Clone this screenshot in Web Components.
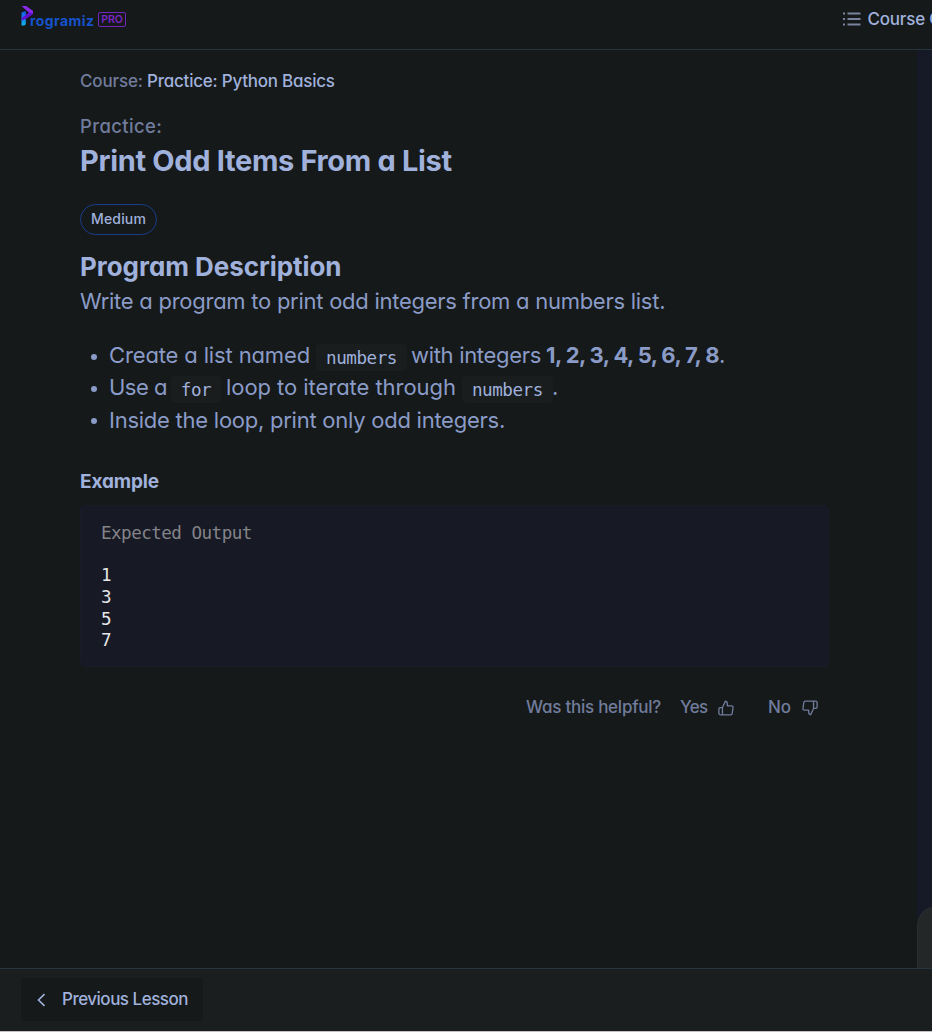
<!DOCTYPE html>
<html lang="en"><head><meta charset="utf-8"><title>Programiz PRO</title>
<style>
html,body{margin:0;height:100%;background:#151919;overflow:hidden}
body{font-family:Inter,"Open Sans",sans-serif;font-feature-settings:"cv11";color:#a0b1dc;--muted:#717c9c;--line:#26343d}
</style></head><body>
<lesson-app></lesson-app>
<script>
const define=(name,html)=>customElements.define(name,class extends HTMLElement{
  constructor(){super();this.attachShadow({mode:'open'}).innerHTML=html;}
});

define('brand-logo',`<style>
:host{display:flex;align-items:flex-start;height:26px;width:108px}
svg{display:block;flex:none;width:13px;height:22px}
b{font:700 14px/20px Inter,sans-serif;letter-spacing:.42px;color:#1552cb;margin:5px 0 0 -4px;width:67px;white-space:nowrap}
i{font:600 10.5px/14px Inter,sans-serif;letter-spacing:0;color:#7a25c4;border:1px solid #7226bd;border-radius:2px;width:26px;height:13px;text-align:center;margin:6px 0 0 1px;box-sizing:content-box}
</style><svg viewBox="0 0 13 22"><defs><linearGradient id="g" x1="0" y1="0" x2="0" y2="1"><stop offset="0" stop-color="#1558e8"/><stop offset="1" stop-color="#10b4ef"/></linearGradient></defs>
<path d="M.5 6.5 4.8 5v12.5q0 2-2 2H.5z" fill="url(#g)"/><path d="M.7 0H5L12 5v3.2L4.8 13 .5 14.5V12L8 6.5z" fill="#6110d2"/><path d="M.7 0H5L12 5v2.5L7.7 6.3z" fill="#8c2be8"/></svg><b>rogramiz</b><i>PRO</i>`);

define('top-bar',`<style>
:host{display:flex;justify-content:space-between;height:49px;border-bottom:1px solid var(--line);box-sizing:content-box;overflow:hidden}
brand-logo{margin:6px 0 0 21px}
.outline{display:flex;width:90px;height:38px;align-items:center;white-space:nowrap;overflow:hidden;font:500 17px/24px Inter,sans-serif;letter-spacing:-.2px}
svg{flex:none;width:20px;height:16px;margin-right:5.5px}
</style><brand-logo></brand-logo><div class="outline"><svg viewBox="0 0 20 16" stroke="#79839f" stroke-width="1.8" fill="none"><path d="M1 2.5h2M1 8h2M1 13.5h2M5.5 2.5h13M5.5 8h13M5.5 13.5h13"/></svg><span>Course O</span></div>`);

define('course-crumb',`<style>:host{display:block;font-size:17px;font-weight:500;line-height:24px;letter-spacing:-.24px;white-space:nowrap}span{color:var(--muted);letter-spacing:-.16px}</style><span>Course: </span><slot></slot>`);

define('lesson-title',`<style>:host{display:block;white-space:nowrap}
p{margin:0;font-size:18.5px;font-weight:500;line-height:24px;letter-spacing:.38px;color:var(--muted)}
h1{margin:0;font-size:29px;font-weight:650;line-height:40px;letter-spacing:-.33px;padding-top:3px}
</style><p><slot name="kind"></slot></p><h1><slot></slot></h1>`);

define('level-badge',`<style>:host{display:block;width:77px;height:31px;box-sizing:border-box;border:1px solid #193c8c;border-radius:16px;font-size:14px;font-weight:500;line-height:27px;letter-spacing:.16px;text-align:center}</style><slot></slot>`);

define('code-chip',`<style>:host{display:block;box-sizing:border-box;height:27px;border-radius:4px;background:#191d1e;font:17.6px/28px "DejaVu Sans Mono",monospace;letter-spacing:-.45px;text-align:center}</style><slot></slot>`);

define('program-brief',`<style>
:host{display:block;font-size:22px;line-height:32px;color:#8b9bc7;white-space:nowrap}
h2{margin:0;font-size:26px;font-weight:650;line-height:36px;letter-spacing:-.05px;color:#a0b1dc}
p{margin:-1px 0 0;line-height:34px;letter-spacing:-.26px}
ul{list-style:none;margin:21px 0 1px;padding:0}
li{display:flex;height:32.3px;align-items:center}
li::before{content:"";flex:none;width:6px;height:6px;border-radius:3px;background:#8b9bc7;margin:3px 12px 0 11px}
code-chip{flex:none;margin:4px 4px 0 6px;width:91px;color:#a0b1dc}
.f{width:50px;margin:4px 5px 0 4px}
b{font-weight:700;letter-spacing:-.59px;margin-left:5px}
</style><h2>Program Description</h2><p>Write a program to print odd integers from a numbers list.</p>
<ul><li><span style="letter-spacing:-.14px">Create a list named</span><code-chip>numbers</code-chip><span style="letter-spacing:-.31px">with integers</span><b>1, 2, 3, 4, 5, 6, 7, 8</b><span>.</span></li>
<li><span style="letter-spacing:-.5px">Use a</span><code-chip class="f">for</code-chip><span style="letter-spacing:-.05px">loop to iterate through</span><code-chip style="margin-right:-1px">numbers</code-chip><span>.</span></li>
<li><span style="letter-spacing:-.25px">Inside the loop, print only odd integers.</span></li></ul>`);

define('example-output',`<style>
:host{display:block}
h3{margin:0 0 11px;font-size:19px;font-weight:650;line-height:24px;letter-spacing:-.15px}
.box{box-sizing:border-box;width:749px;height:162px;padding:17px 20px 15px;border:1px solid #191b2b;border-radius:5px;background:#171924;font:17.6px/21.6px "DejaVu Sans Mono",monospace;letter-spacing:-.54px;color:#e4e6e8}
.cap{color:#838489;margin-bottom:21px}
pre{margin:0;font:inherit}
</style><h3>Example</h3><div class="box"><div class="cap">Expected Output</div><pre><slot></slot></pre></div>`);

define('thumb-icon',`<style>:host{display:block;width:16px;height:16px;flex:none}:host([down]) svg{transform:rotate(180deg)}svg{display:block;width:16px;height:16px}</style>
<svg viewBox="0 0 18 18" fill="none" stroke="#707b9b" stroke-width="1.5" stroke-linejoin="round" stroke-linecap="round"><path d="M5 8.5 8.3 1.4q2.2.2 2.2 2.4v2.8h4.9q1.7.2 1.5 1.8l-.9 6.7q-.3 1.6-1.7 1.6H5M5 8.5v8.2M5 8.5H2.5q-1.5.1-1.5 1.5v5q.1 1.7 1.5 1.7H5"/></svg>`);

define('helpful-vote',`<style>:host{display:flex;align-items:center;height:24px;font-size:17px;font-weight:500;line-height:24px;color:var(--muted);white-space:nowrap}
span{flex:none;letter-spacing:-.25px}thumb-icon{margin-top:3px}
.y{margin-left:19px;width:38px;letter-spacing:-.7px}.n{margin-left:34px;width:34px}
</style><span>Was this helpful?</span><span class="y">Yes</span><thumb-icon></thumb-icon><span class="n">No</span><thumb-icon down></thumb-icon>`);

define('side-rail',`<style>:host{display:flex;flex-direction:column;justify-content:flex-end;width:15px;background:#161926;overflow:hidden}
div{height:62px;width:40px;box-sizing:border-box;background:#232728;border-radius:20px 0 0 0;border:1px solid #2a2e2f;border-width:1px 0 0 1px}</style><div></div>`);

define('bottom-bar',`<style>:host{display:flex;box-sizing:border-box;height:64px;border-top:1px solid var(--line);border-bottom:1px solid #c5c0c3;background:#1a1e1f;padding:9px 0 0 21px}
a{display:flex;align-items:center;box-sizing:border-box;width:182px;height:43px;border-radius:4px;background:#151919;padding:0 0 2px 15px;font-size:17px;font-weight:500;line-height:24px;letter-spacing:-.5px;white-space:nowrap}
svg{width:11px;height:14px;margin:3px 15px 0 0;flex:none}</style><a><svg viewBox="0 0 11 14" fill="none" stroke="#a0b1dc" stroke-width="1.6"><path d="M8.5 1.2 2.5 7l6 5.8"/></svg><slot></slot></a>`);

define('lesson-app',`<style>
:host{display:grid;grid-template-rows:50px 1fr 64px;width:932px;height:1032px;overflow:hidden}
.mid{display:grid;grid-template-columns:1fr 15px}
main{display:flex;flex-direction:column;padding:19px 0 0 80px}
lesson-title{margin-top:21.4px}level-badge{margin-top:22.6px}program-brief{margin-top:14px}example-output{margin-top:33px}helpful-vote{margin:28px 0 0 446px}
</style><top-bar></top-bar><div class="mid"><main>
<course-crumb>Practice: Python Basics</course-crumb>
<lesson-title><span slot="kind">Practice:</span>Print Odd Items From a List</lesson-title>
<level-badge>Medium</level-badge><program-brief></program-brief>
<example-output>1
3
5
7</example-output><helpful-vote></helpful-vote></main><side-rail></side-rail></div><bottom-bar>Previous Lesson</bottom-bar>`);
</script></body></html>
